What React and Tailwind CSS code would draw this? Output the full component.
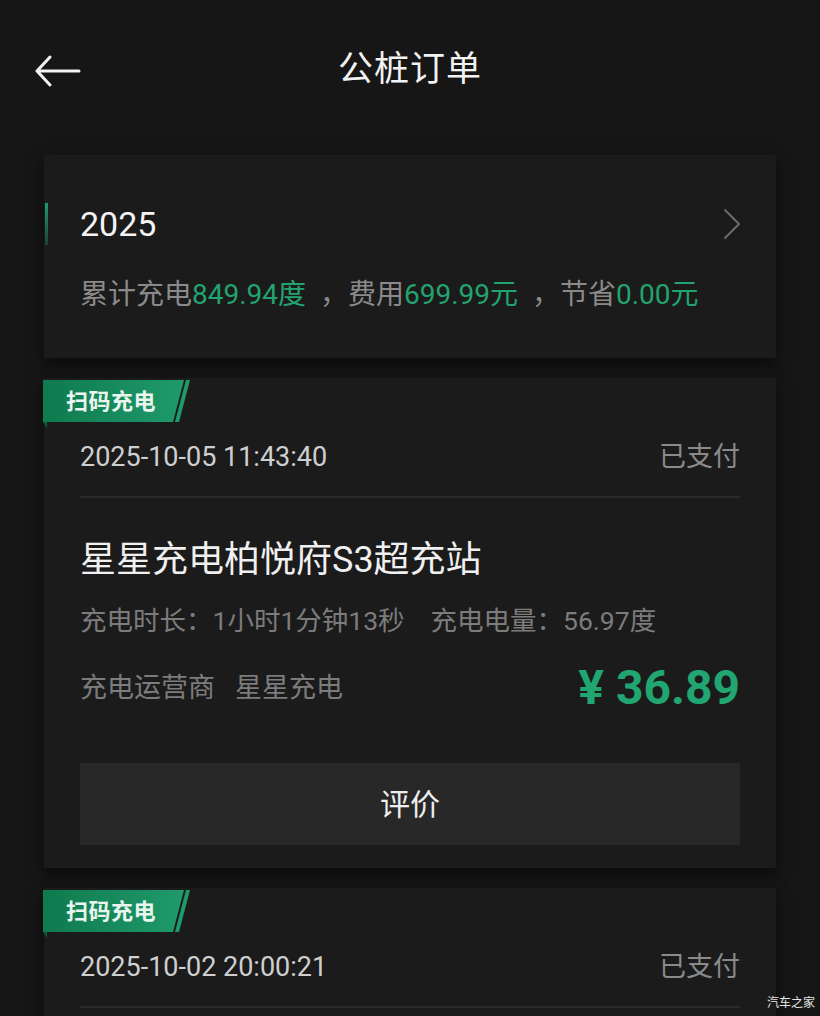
import React from "react";

const FONT = { fontFamily: '"Roboto", "Noto Sans CJK SC", sans-serif' };

function BackArrow() {
  return (
    <svg width="46" height="32" viewBox="0 0 46 32" fill="none">
      <path d="M44 16H3M15 2L2 16l13 14" stroke="#f2f2f2" strokeWidth="3" strokeLinecap="round" strokeLinejoin="round" />
    </svg>
  );
}

function Chevron() {
  return (
    <svg width="20" height="32" viewBox="0 0 20 32" fill="none">
      <path d="M3 2l14 14L3 30" stroke="#6a6a6a" strokeWidth="2" strokeLinecap="round" strokeLinejoin="round" />
    </svg>
  );
}

// 绿色斜角标签
function Tag({ text }) {
  return (
    <div className="relative w-[148px] h-[42px] -ml-[1px]">
      <svg className="absolute left-0 top-0 overflow-visible" width="148" height="48" viewBox="0 0 148 48">
        <defs>
          <linearGradient id="tagg" x1="0" y1="0" x2="1" y2="0">
            <stop offset="0" stopColor="#0f7a4e" />
            <stop offset="1" stopColor="#1f9a6b" />
          </linearGradient>
        </defs>
        <polygon points="0,0 141,0 130,42 0,42" fill="url(#tagg)" />
        <polygon points="143,0 147,0 136,42 132,42" fill="#1f9a6b" />
        <polygon points="0,42 4,42 4,48" fill="#0b5a39" />
      </svg>
      <div className="relative h-[42px] flex items-center pl-[23px] text-[22px] font-bold text-[#e9f6ef] tracking-[0.5px]">
        {text}
      </div>
    </div>
  );
}

function OrderCard({ date, full }) {
  return (
    <div className="bg-[#1b1b1b] shadow-[0_6px_14px_rgba(0,0,0,0.55)] pt-[2px] pb-[23px] shrink-0">
      <Tag text="扫码充电" />
      <div className="px-[36px]">
        <div className="mt-[15px] h-[40px] flex items-center justify-between">
          <span className="text-[27px] text-[#cfcfcf]">{date}</span>
          <span className="text-[27px] text-[#8a8a8a]">已支付</span>
        </div>
        <div className="mt-[19px] h-[2px] bg-[#2a2a2a]" />
        {full && (
          <>
            <div className="mt-[40px] h-[44px] flex items-center text-[36px] text-[#f0f0f0]">
              星星充电柏悦府S3超充站
            </div>
            <div className="mt-[23px] h-[32px] flex items-center text-[26.5px] text-[#7c7c7c]">
              <span>充电时长：1小时1分钟13秒</span>
              <span className="ml-[26px]">充电电量：56.97度</span>
            </div>
            <div className="mt-[25px] h-[52px] flex items-center justify-between">
              <div className="text-[27px] text-[#7c7c7c]">
                <span>充电运营商</span>
                <span className="ml-[20px]">星星充电</span>
              </div>
              <div className="text-[48px] font-bold text-[#21a672] leading-none">
                ¥ 36.89
              </div>
            </div>
            <button className="mt-[49px] w-full h-[82px] bg-[#282828] flex items-center justify-center text-[30px] text-[#eeeeee]">
              评价
            </button>
          </>
        )}
      </div>
    </div>
  );
}

export default function App() {
  return (
    <div className="relative w-[820px] h-[1016px] overflow-hidden bg-[#161616]" style={FONT}>
      {/* 顶部导航 */}
      <div className="h-[140px] grid grid-cols-[1fr_auto_1fr] items-center">
        <div className="pl-[35px] pt-[2px]">
          <BackArrow />
        </div>
        <h1 className="text-[35px] text-[#f2f2f2] tracking-[1px]">公桩订单</h1>
        <div />
      </div>

      <div className="px-[44px] pt-[15px] flex flex-col gap-[20px]">
        {/* 年度汇总 */}
        <div className="bg-[#1b1b1b] shadow-[0_6px_14px_rgba(0,0,0,0.55)] h-[203px] shrink-0">
          <div className="mt-[48px] h-[42px] flex items-center">
            <div className="ml-[1px] w-[3px] h-full bg-gradient-to-b from-[#1f9a6f] to-[#1f9a6f]/30" />
            <div className="ml-[32px] flex-1 text-[34px] text-[#f4f4f4]">2025</div>
            <div className="mr-[34px]">
              <Chevron />
            </div>
          </div>
          <div className="mt-[34px] h-[32px] flex items-center pl-[36px] text-[28px] text-[#8a8a8a] whitespace-pre">
            <span>累计充电</span>
            <span className="text-[#22a36f]">849.94度</span>
            <span>  ，费用</span>
            <span className="text-[#22a36f]">699.99元</span>
            <span>  ，节省</span>
            <span className="text-[#22a36f]">0.00元</span>
          </div>
        </div>

        <OrderCard date="2025-10-05 11:43:40" full />
        <OrderCard date="2025-10-02 20:00:21" />
      </div>

      {/* 水印 */}
      <div className="absolute right-[5px] bottom-[4px] text-[12px] text-white/90">汽车之家</div>
    </div>
  );
}
